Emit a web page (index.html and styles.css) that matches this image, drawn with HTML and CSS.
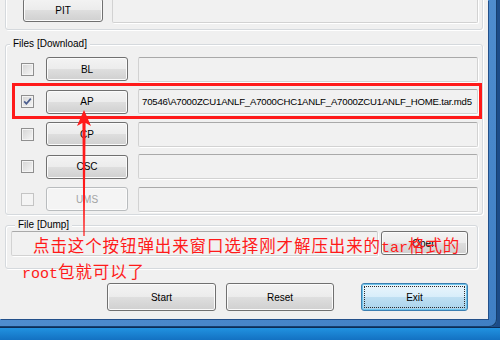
FILE: index.html
```html
<!doctype html>

<html>
  <head>
    <title>Odin</title>
    <link rel="stylesheet" href="styles.css">
  </head>

  <body>
    <div class="desktop">
      <div class="window">
        <div class="client">

          <!-- PIT box, mostly scrolled off the top. -->
          <div class="group group-pit">
            <button class="btn btn-pit">PIT</button>
            <div class="field"></div>
          </div>

          <!-- Files to flash. -->
          <div class="group group-files">
            <div class="group-title">Files [Download]</div>
            <div class="file-rows">
              <div class="file-row">
                <span class="check"></span>
                <button class="btn">BL</button>
                <div class="field"></div>
              </div>
              <div class="file-row">
                <span class="check">
                  <svg width="11" height="11" viewBox="0 0 11 11"><path d="M2.2 5.4 L4.4 7.8 L8.8 2.6" fill="none" stroke="#4b5d8e" stroke-width="1.7"/></svg>
                </span>
                <button class="btn">AP</button>
                <div class="field">70546\A7000ZCU1ANLF_A7000CHC1ANLF_A7000ZCU1ANLF_HOME.tar.md5</div>
              </div>
              <div class="file-row">
                <span class="check"></span>
                <button class="btn">CP</button>
                <div class="field"></div>
              </div>
              <div class="file-row">
                <span class="check"></span>
                <button class="btn">CSC</button>
                <div class="field"></div>
              </div>
              <div class="file-row">
                <span class="check check-disabled"></span>
                <button class="btn btn-disabled">UMS</button>
                <div class="field"></div>
              </div>
            </div>
          </div>

          <!-- Dump. -->
          <div class="group group-dump">
            <div class="group-title">File [Dump]</div>
            <div class="dump-row">
              <div class="field"></div>
              <button class="btn btn-open">Open</button>
            </div>
          </div>

          <div class="actions">
            <button class="btn btn-start">Start</button>
            <button class="btn btn-reset">Reset</button>
            <button class="btn btn-exit">Exit</button>
          </div>
        </div>
      </div>

      <!-- Red annotations drawn over the screenshot. -->
      <div class="annot-box"></div>
      <svg class="annot-arrow" width="500" height="340" viewBox="0 0 500 340">
        <polygon points="84,110 91,126 85.6,123 84.6,236 83.4,236 82.4,123 77,126" fill="#ff1a1a"/>
      </svg>
      <div class="annot-note">
        <div class="note-first">点击这个按钮弹出来窗口选择刚才解压出来的<span class="latin">tar</span>格式的</div>
        <div><span class="latin">root</span>包就可以了</div>
      </div>
    </div>
  </body>
</html>
```

FILE: styles.css
```css
* { box-sizing: border-box; }
html, body {
  overflow: hidden;
  width: 500px;
  height: 340px;
  margin: 0;
  padding: 0;
}
body {
  font-family: "Liberation Sans", Arial, sans-serif;
  font-size: 10px;
  color: #000;
}
.desktop {
  position: relative;
  width: 500px;
  height: 340px;
  background: linear-gradient(
    to bottom,
    #1c4c88 0, #1c4c88 327px,
    #0c2d57 327px, #0c2d57 328px,
    #2192e0 328px, #1371c2 340px
  );
}
.window {
  width: 497px;
  height: 327px;
  padding: 0 8px 7px 0;
  border-bottom-right-radius: 7px;
  background: linear-gradient(to bottom right, #5d9ad8, #3f7fc4);
  box-shadow: inset -1px -1px 0 #17406f;
}
.client {
  display: flex;
  flex-direction: column;
  overflow: hidden;
  width: 488px;
  height: 319px;
  background: #f0f0f0;
  box-shadow: 1px 1px 0 #23508a;
}

/* Group boxes. */
.group {
  margin: 0 5px;
  border: 1px solid #d5d9dd;
  border-radius: 3px;
  box-shadow: inset 1px 1px 0 #fff, 1px 1px 0 #fff;
}
.group-title {
  width: max-content;
  height: 12px;
  margin: -7px 0 0 4px;
  padding: 0 3px;
  line-height: 12px;
  background: #f0f0f0;
}
.group-pit {
  display: flex;
  align-items: flex-end;
  gap: 9px;
  height: 44px;
  margin-top: -14px;
  padding: 0 4px 6px 17px;
}
.btn-pit { width: 80px; margin-bottom: 1px; }
.group-files { margin-top: 14px; }
.file-rows {
  display: flex;
  flex-direction: column;
  gap: 8.5px;
  padding: 7px 4px 3px 15px;
}
.file-row {
  display: flex;
  align-items: center;
  height: 24px;
}
.file-row .btn { width: 82px; margin-right: 10px; }
.group-dump { margin: 10px 10px 0 5px; }
.group-dump .group-title { margin-left: 9px; }
.dump-row {
  display: flex;
  gap: 3px;
  padding: 0 9px 12px 5px;
}
.btn-open { width: 87px; color: #9a9a9a; }

/* Controls. */
.btn {
  height: 24px;
  padding: 0;
  font: inherit;
  color: #000;
  border: 1px solid #707070;
  border-radius: 3px;
  background: linear-gradient(#f3f3f3, #ececec 48%, #dedede 52%, #d0d0d0);
  box-shadow: inset 0 0 0 1px #fbfbfb;
}
.btn-disabled {
  color: #a3a3a3;
  border-color: #b9bcbe;
  background: #f4f4f4;
}
.field {
  flex: 1;
  height: 25px;
  overflow: hidden;
  padding: 0 3px;
  font-size: 9.6px;
  line-height: 23px;
  white-space: nowrap;
  letter-spacing: -0.2px;
  border: 1px solid #d2d2d2;
  border-top-color: #a9a9a9;
  border-radius: 2px;
  background: #f1f1f1;
  box-shadow: 1px 1px 0 #fff;
}
.check {
  display: flex;
  align-items: center;
  justify-content: center;
  flex: none;
  width: 13px;
  height: 13px;
  margin-right: 12px;
  border: 1px solid #8f8f8f;
  background: linear-gradient(to bottom right, #d4d4d4, #f6f6f6);
  box-shadow: inset 0 0 0 1px #f4f4f4;
}
.check-disabled {
  border-color: #c4c4c4;
  background: #f4f4f4;
}

/* Bottom buttons. */
.actions {
  display: flex;
  height: 28px;
  margin-top: 14px;
  padding-left: 107px;
}
.actions .btn { height: 28px; }
.btn-start { width: 109px; }
.btn-reset { width: 108px; margin-left: 10px; }
.btn-exit {
  width: 107px;
  margin-left: 27px;
  border-color: #3c7fb1;
  background: linear-gradient(#eaf5fc, #d9eefa 48%, #bedff2 52%, #a9d3ec);
  box-shadow: inset 0 0 0 1px #70c4ea;
  outline: 1px dotted #2d2d2d;
  outline-offset: -4px;
}

/* Annotations. */
.annot-box {
  position: absolute;
  left: 12px; top: 83px;
  width: 470px; height: 36px;
  border: 3px solid #ff1a1a;
}
.annot-arrow {
  position: absolute;
  left: 0; top: 0;
}
.annot-note {
  position: absolute;
  left: 22px; top: 234px;
  font-family: "Noto Sans CJK SC", sans-serif;
  font-size: 16.5px;
  line-height: 23px;
  letter-spacing: 0.9px;
  color: #ff1a1a;
  white-space: nowrap;
}
.note-first { padding-left: 11px; }
.latin {
  font-family: "Liberation Mono", monospace;
  font-size: 15px;
  letter-spacing: 0;
}
```
